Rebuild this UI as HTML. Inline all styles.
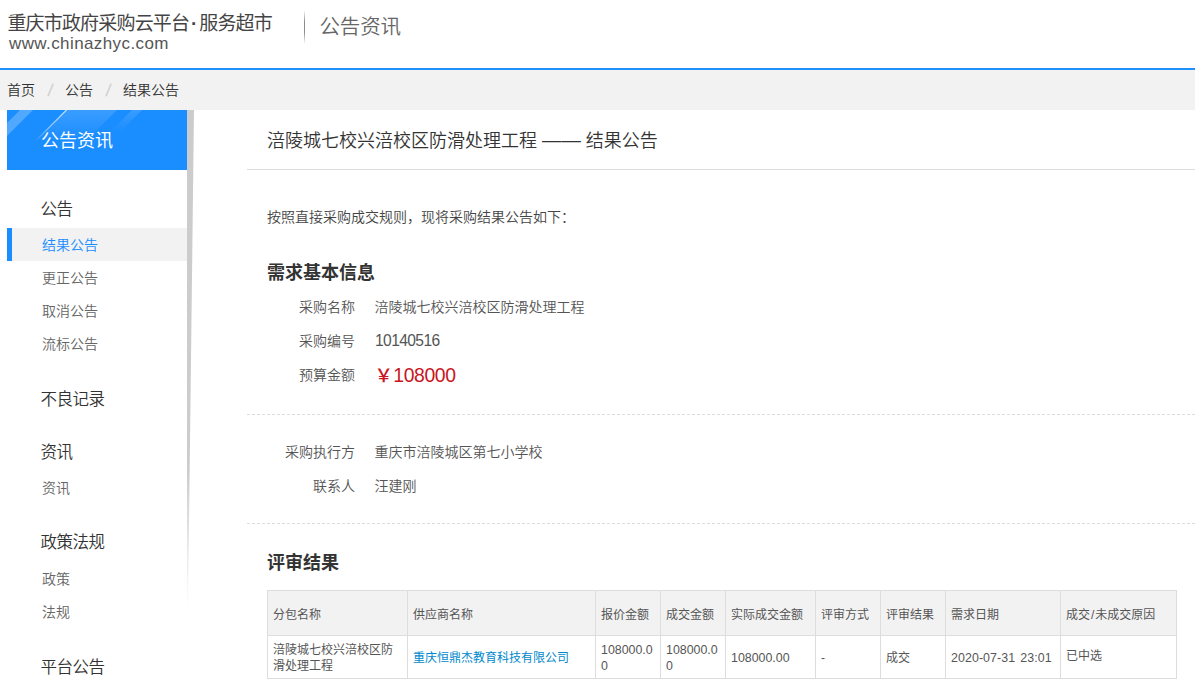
<!DOCTYPE html>
<html lang="zh-CN">
<head>
<meta charset="utf-8">
<title>涪陵城七校兴涪校区防滑处理工程 —— 结果公告</title>
<style>
*{box-sizing:border-box;margin:0;padding:0}
html,body{width:1195px;height:694px;overflow:hidden;background:#fff}
body{position:relative;font-family:"Liberation Sans","Noto Sans CJK SC",sans-serif;font-size:14px;color:#333;line-height:1;font-weight:350}
.abs{position:absolute;white-space:nowrap}
a{text-decoration:none;color:inherit}

/* header */
#logo1{left:7.4px;top:12px;font-size:19px;line-height:24px;color:#444;font-weight:400;letter-spacing:-.82px}
#logo1 i{display:inline-block;width:10px;text-align:center;font-style:normal;letter-spacing:0;font-weight:700}
#logo2{left:9px;top:34px;font-size:17px;line-height:20px;color:#555;letter-spacing:.4px}
#hsep{left:304px;top:10px;width:1px;height:34px;background:linear-gradient(to bottom,rgba(140,140,140,0),rgba(140,140,140,1) 35%,rgba(140,140,140,1) 65%,rgba(140,140,140,0))}
#htitle{left:319.4px;top:14px;font-size:20.5px;line-height:26px;color:#666;letter-spacing:-.1px}
#hline{left:0;top:68px;width:1195px;height:2px;background:#1e90ff}

/* breadcrumb */
#crumb{left:0;top:70px;width:1195px;height:40px;background:#f2f2f2}
#crumb span{position:absolute;top:0;line-height:40px;font-size:14px;color:#333;white-space:nowrap}
#crumb span.s{color:#ccc;font-size:17px;transform:skewX(-8deg);line-height:41px}

/* sidebar */
#sbhead{left:7px;top:110px;width:180px;height:60px;background:#1a8dff;overflow:hidden}
#sbhead b{position:absolute;left:34px;top:1px;line-height:60px;font-size:18px;font-weight:normal;color:#fff}
#sbactive{left:7px;top:228px;width:180px;height:33px;background:#f2f2f2;border-left:5px solid #1a8dff}
.g{left:40.5px;font-size:16.5px;line-height:20px;color:#333;letter-spacing:-.5px}
.i{left:42px;font-size:14px;line-height:20px;color:#666}
.i.on{color:#1a8dff}

/* main */
#title{left:267px;top:128px;font-size:18px;line-height:26px;color:#333}
#tline{left:247px;top:169px;width:948px;height:1px;background:#ddd}
.dash{left:247px;width:948px;height:0;border-top:1px dashed #ddd}
.h2{left:267px;font-size:18px;line-height:24px;font-weight:bold;color:#333}
.lab{width:108px;left:247px;text-align:right;font-size:14px;line-height:20px;color:#555}
.val{left:374.5px;font-size:14px;line-height:20px;color:#555}
#price{left:374.4px;top:363px;font-size:18.4px;line-height:24px;color:#c81623;font-weight:500}
#price b{font-weight:350;font-size:19.4px;margin-left:.5px;letter-spacing:-.4px}

/* table */
#tb{left:267px;top:590px;border-collapse:collapse;table-layout:fixed;width:909px;font-size:12px;color:#555}
#tb td,#tb th{border:1px solid #ddd;padding:0 6px 0 5px;text-align:left;font-weight:normal;line-height:16px;vertical-align:middle;white-space:normal;word-break:break-all}
#tb th{height:45px;background:#f2f2f2;color:#555;padding-top:3px}
#tb td{height:43px;padding-top:1px}
#tb a{color:#0088cc}
#tb .n{font-size:12.4px}
#tb .d{font-size:12.4px;word-spacing:1.5px;letter-spacing:.08px;white-space:nowrap}
#tb .u{position:relative;top:-1.5px}
</style>
</head>
<body>

<div class="abs" id="logo1">重庆市政府采购云平台<i>·</i>服务超市</div>
<div class="abs" id="logo2">www.chinazhyc.com</div>
<div class="abs" id="hsep"></div>
<div class="abs" id="htitle">公告资讯</div>
<div class="abs" id="hline"></div>

<div class="abs" id="crumb">
  <span style="left:7px">首页</span><span class="s" style="left:48px">/</span>
  <span style="left:65px">公告</span><span class="s" style="left:106px">/</span>
  <span style="left:123px">结果公告</span>
</div>

<div class="abs" id="sbhead">
  <svg width="180" height="60" style="position:absolute;left:0;top:0">
    <defs>
      <linearGradient id="fd" x1="0" y1="0" x2="0" y2="1"><stop offset="0" stop-color="#fff" stop-opacity=".14"/><stop offset="1" stop-color="#fff" stop-opacity="0"/></linearGradient>
      <linearGradient id="fl" gradientUnits="userSpaceOnUse" x1="59.5" y1="0" x2="27.5" y2="32"><stop offset="0" stop-color="#fff" stop-opacity=".7"/><stop offset=".6" stop-color="#fff" stop-opacity=".4"/><stop offset="1" stop-color="#fff" stop-opacity="0"/></linearGradient>
    </defs>
    <polygon points="13,0 26,0 0,26 0,13" fill="#fff" fill-opacity=".24"/>
    <polygon points="59.5,0 110,0 80,30 29.5,30" fill="url(#fd)"/>
    <polygon points="125,0 135,0 113,22 103,22" fill="url(#fd)"/>
    <line x1="59.5" y1="0" x2="27.5" y2="32" stroke="url(#fl)" stroke-width="1.3"/>
  </svg>
  <b>公告资讯</b>
</div>
<svg class="abs" id="sbshadow" width="8" height="500" style="left:187px;top:110px">
  <defs><linearGradient id="sg" x1="0" y1="0" x2="0" y2="1">
    <stop offset="0" stop-color="#ccc"/><stop offset=".72" stop-color="#ccc"/><stop offset="1" stop-color="#ccc" stop-opacity="0"/>
  </linearGradient></defs>
  <polygon points="0,0 7,0 1,500 0,500" fill="url(#sg)"/>
</svg>

<div class="abs" id="sbactive"></div>
<div class="abs g" style="top:199px">公告</div>
<div class="abs i on" style="top:235px">结果公告</div>
<div class="abs i" style="top:268px">更正公告</div>
<div class="abs i" style="top:301px">取消公告</div>
<div class="abs i" style="top:334px">流标公告</div>
<div class="abs g" style="top:389px">不良记录</div>
<div class="abs g" style="top:442px">资讯</div>
<div class="abs i" style="top:478px">资讯</div>
<div class="abs g" style="top:532px">政策法规</div>
<div class="abs i" style="top:569px">政策</div>
<div class="abs i" style="top:602px">法规</div>
<div class="abs g" style="top:657px">平台公告</div>

<div class="abs" id="title">涪陵城七校兴涪校区防滑处理工程 <span style="font-size:19.4px;line-height:20px">——</span>&nbsp;结果公告</div>
<div class="abs" id="tline"></div>
<div class="abs val" style="left:267px;top:207px;color:#444">按照直接采购成交规则，现将采购结果公告如下：</div>

<div class="abs h2" style="top:260.5px">需求基本信息</div>
<div class="abs lab" style="top:297px">采购名称</div><div class="abs val" style="top:297px">涪陵城七校兴涪校区防滑处理工程</div>
<div class="abs lab" style="top:331px">采购编号</div><div class="abs val" style="top:331px;font-size:15.6px;left:375px;letter-spacing:-.6px">10140516</div>
<div class="abs lab" style="top:365px">预算金额</div><div class="abs" id="price">￥<b>108000</b></div>
<div class="abs dash" style="top:414px"></div>

<div class="abs lab" style="top:442px">采购执行方</div><div class="abs val" style="top:442px">重庆市涪陵城区第七小学校</div>
<div class="abs lab" style="top:476px">联系人</div><div class="abs val" style="top:476px">汪建刚</div>
<div class="abs dash" style="top:523px"></div>

<div class="abs h2" style="top:551px">评审结果</div>

<table class="abs" id="tb">
<colgroup><col style="width:140px"><col style="width:188px"><col style="width:65px"><col style="width:65px"><col style="width:90px"><col style="width:65px"><col style="width:65px"><col style="width:115px"><col style="width:116px"></colgroup>
<tr><th>分包名称</th><th>供应商名称</th><th>报价金额</th><th>成交金额</th><th>实际成交金额</th><th>评审方式</th><th>评审结果</th><th>需求日期</th><th>成交<span style="padding:0 1px">/</span>未成交原因</th></tr>
<tr><td>涪陵城七校兴涪校区防滑处理工程</td><td><a>重庆恒鼎杰教育科技有限公司</a></td><td class="n">108000.00</td><td class="n">108000.00</td><td class="n">108000.00</td><td>-</td><td>成交</td><td class="d">2020-07-31 23:01</td><td><span class="u">已中选</span></td></tr>
</table>

</body>
</html>
